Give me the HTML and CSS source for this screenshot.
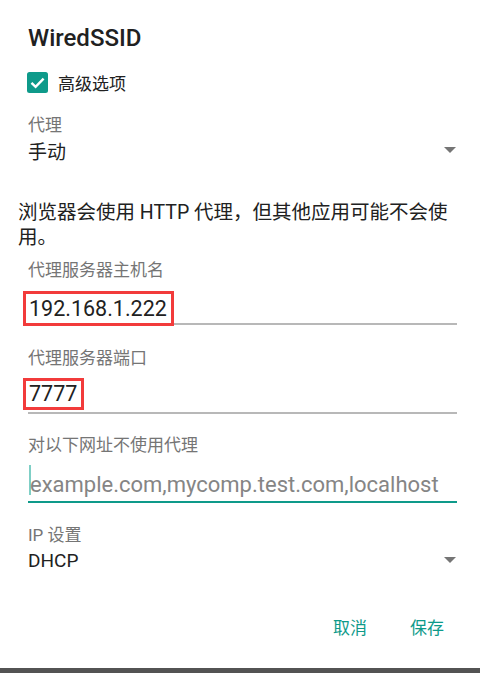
FILE: index.html
```html
<!DOCTYPE html>
<html lang="zh-CN">
<head>
    <meta charset="UTF-8">
    <meta name="viewport" content="width=device-width, initial-scale=1.0">
    <title>WiredSSID</title>
    <link rel="stylesheet" href="styles.css">
</head>
<body>
    <div class="dialog">
        <h1 class="title">WiredSSID</h1>

        <label class="check-row">
            <svg class="checkbox" width="21" height="21" viewBox="0 0 21 21">
                <rect x="0" y="0" width="21" height="21" rx="2.5" fill="#0e9a8a"/>
                <path d="M4.5 10.8 L8.6 14.8 L16.6 6.6" fill="none" stroke="#fff" stroke-width="2.4"/>
            </svg>
            <span>高级选项</span>
        </label>

        <div class="label label-proxy">代理</div>
        <div class="spinner">
            <span>手动</span>
            <span class="arrow"></span>
        </div>

        <p class="note">浏览器会使用 HTTP 代理，但其他应用可能不会使用。</p>

        <div class="label label-host">代理服务器主机名</div>
        <div class="field field-host">
            <span class="mark mark-host">192.168.1.222</span>
        </div>

        <div class="label label-port">代理服务器端口</div>
        <div class="field field-port">
            <span class="mark mark-port">7777</span>
        </div>

        <div class="label label-bypass">对以下网址不使用代理</div>
        <div class="field field-bypass">
            <span class="caret"></span>
            <span class="placeholder">example.com,mycomp.test.com,localhost</span>
        </div>

        <div class="label label-ip">IP 设置</div>
        <div class="spinner">
            <span>DHCP</span>
            <span class="arrow"></span>
        </div>

        <div class="actions">
            <button class="btn">取消</button>
            <button class="btn">保存</button>
        </div>
    </div>
    <div class="bottom-bar"></div>
</body>
</html>
```

FILE: styles.css
```css
body {
    margin: 0;
    background-color: #fff;
    font-family: Roboto, "Noto Sans CJK SC", sans-serif;
    color: #212121;
}

.dialog {
    padding: 22px 23px 0 28px;
}

.title {
    margin: 0;
    font-size: 24px;
    font-weight: 500;
    line-height: 32px;
    color: #212121;
}

.check-row {
    display: flex;
    align-items: center;
    height: 32px;
    margin: 12px 0 0 -1px;
    font-size: 17px;
}

.checkbox {
    margin-right: 10px;
}

.label {
    font-size: 17px;
    line-height: 22px;
    color: #757575;
}

.label-proxy {
    margin-top: 16px;
}

.spinner {
    display: flex;
    align-items: center;
    justify-content: space-between;
    height: 28px;
    font-size: 19px;
    color: #212121;
}

.arrow {
    width: 0;
    height: 0;
    margin-right: 1px;
    border-left: 6px solid transparent;
    border-right: 6px solid transparent;
    border-top: 6px solid #757575;
}

.note {
    margin: 36px 0 0 -10px;
    font-size: 19.5px;
    line-height: 25px;
    color: #212121;
}

.label-host {
    margin-top: 9px;
}

.field {
    display: flex;
    border-bottom: 2px solid #b8b8b8;
    font-size: 21.5px;
}

.mark {
    border: 3px solid #f23b3b;
    padding: 0 4px 0 3px;
    margin-left: -5px;
    color: #212121;
}

.field-host {
    margin-top: 10px;
    height: 32px;
    align-items: flex-start;
}

.mark-host {
    line-height: 29px;
}

.label-port {
    margin-top: 22px;
}

.field-port {
    margin-top: 9px;
    height: 34px;
    align-items: flex-start;
}

.mark-port {
    line-height: 26px;
}

.label-bypass {
    margin-top: 20px;
}

.field-bypass {
    height: 45px;
    align-items: flex-start;
    border-bottom-color: #0e9a8a;
}

.caret {
    width: 2px;
    height: 30px;
    margin: 9px -1px 0 1px;
    background-color: #7fcfc6;
}

.placeholder {
    margin-top: 14px;
    line-height: 30px;
    color: #858585;
    font-size: 22px;
}

.label-ip {
    margin-top: 21px;
}

.actions {
    display: flex;
    justify-content: flex-end;
    gap: 43px;
    margin: 40px 13px 0 0;
}

.btn {
    padding: 0;
    border: none;
    background: none;
    font-family: Roboto, "Noto Sans CJK SC", sans-serif;
    font-size: 17px;
    line-height: 28px;
    color: #0e9a8a;
}

.bottom-bar {
    height: 5px;
    margin-top: 26px;
    background-color: #535353;
}
```
